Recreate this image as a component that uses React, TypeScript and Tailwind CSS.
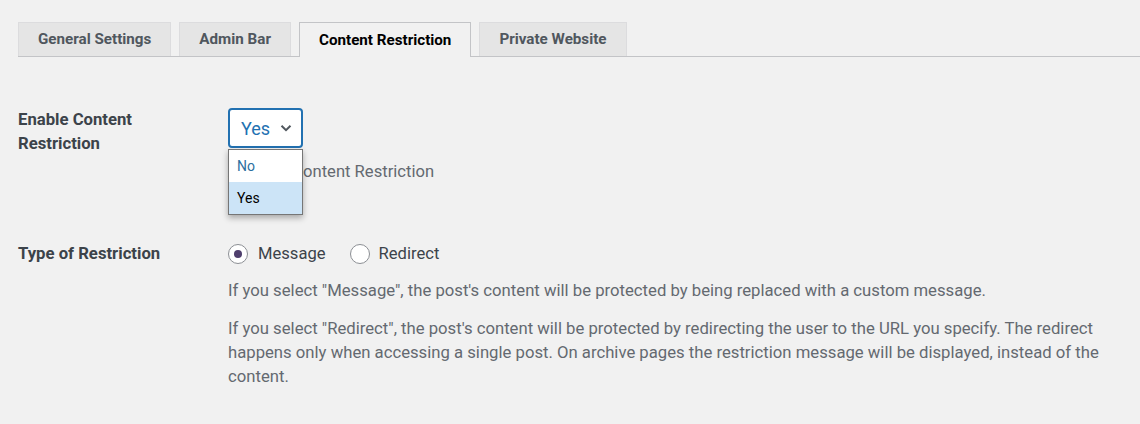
export default function App() {
  const tabs = ['General Settings', 'Admin Bar', 'Content Restriction', 'Private Website'];
  const active = 'Content Restriction';

  return (
    <div className="min-h-[424px] w-full bg-[#f1f1f1] pt-[22px] pl-[18px] font-['Roboto',sans-serif] text-[#3c434a]">
      {/* Tabs */}
      <div className="flex gap-2 border-b border-[#c3c4c7]">
        {tabs.map((t) => (
          <div
            key={t}
            className={
              t === active
                ? '-mb-px flex h-[35px] items-center border border-b-0 border-[#c3c4c7] bg-[#f1f1f1] px-[19px] text-[15.2px] font-bold text-black'
                : 'flex h-[34px] items-center border border-b-0 border-[#dcdcde] bg-[#e5e5e5] px-[19px] text-[15.2px] font-bold text-[#50575e]'
            }
          >
            {t}
          </div>
        ))}
      </div>

      <div className="pr-5">
        {/* Enable Content Restriction */}
        <div className="mt-[51px] flex">
          <div className="w-[210px] shrink-0 text-[16.7px] leading-6 font-bold">
            Enable Content
            <br />
            Restriction
          </div>
          <div className="relative">
            <div className="flex h-10 w-[75px] items-center justify-between rounded border-2 border-[#2271b1] bg-white pr-[8px] pl-[11px] text-[18px] text-[#2271b1]">
              <span>Yes</span>
              <svg width="14" height="14" viewBox="0 0 14 14" fill="none">
                <path d="M2.5 4.8 7 9.2l4.5-4.4" stroke="#50575e" strokeWidth="2" />
              </svg>
            </div>
            <p className="mt-3 text-[16.6px] leading-6 text-[#646970]">Activate Content Restriction</p>

            {/* open dropdown */}
            <div className="absolute top-[41px] left-0 w-[75px] border border-[#767676] bg-white text-[14px] shadow-[0_3px_6px_rgba(0,0,0,0.3)]">
              <div className="flex h-8 items-center pl-2 text-[#2c6fa0]">No</div>
              <div className="flex h-8 items-center bg-[#cce4f7] pl-2 text-black">Yes</div>
            </div>
          </div>
        </div>

        {/* Type of Restriction */}
        <div className="mt-[57px] flex">
          <div className="w-[210px] shrink-0 pt-[1px] text-[16.7px] leading-6 font-bold">Type of Restriction</div>
          <div className="text-[16.6px] leading-6">
            <div className="flex items-center pt-[1px]">
              <label className="flex items-center gap-[10px]">
                <span className="flex h-5 w-5 items-center justify-center rounded-full border border-[#8c8f94] bg-white">
                  <span className="h-2 w-2 rounded-full bg-[#4f3f6d]" />
                </span>
                <span>Message</span>
              </label>
              <label className="ml-[24px] flex items-center gap-[9px]">
                <span className="h-5 w-5 rounded-full border border-[#8c8f94] bg-white" />
                <span>Redirect</span>
              </label>
            </div>
            <p className="mt-[13px] text-[16.7px] text-[#646970]">
              If you select "Message", the post's content will be protected by being replaced with a custom message.
            </p>
            <p className="mt-[14px] text-[16.7px] text-[#646970]">
              If you select "Redirect", the post's content will be protected by redirecting the user to the URL you
              specify. The redirect happens only when accessing a single post. On archive pages the restriction message
              will be displayed, instead of the content.
            </p>
          </div>
        </div>
      </div>
    </div>
  );
}
